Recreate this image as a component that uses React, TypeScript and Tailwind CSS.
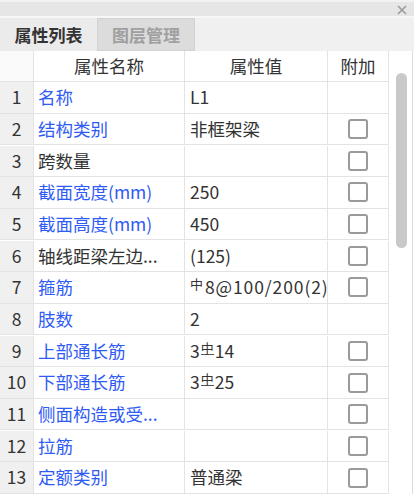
const rows = [
  { name: "名称", blue: true, value: "L1", check: false },
  { name: "结构类别", blue: true, value: "非框架梁", check: true },
  { name: "跨数量", blue: false, value: "", check: true },
  { name: "截面宽度(mm)", blue: true, value: "250", check: true },
  { name: "截面高度(mm)", blue: true, value: "450", check: true },
  { name: "轴线距梁左边...", blue: false, value: "(125)", check: true },
  { name: "箍筋", blue: true, value: "stirrup", check: true },
  { name: "肢数", blue: true, value: "2", check: false },
  { name: "上部通长筋", blue: true, value: "top", check: true },
  { name: "下部通长筋", blue: true, value: "bottom", check: true },
  { name: "侧面构造或受...", blue: true, value: "", check: true },
  { name: "拉筋", blue: true, value: "", check: true },
  { name: "定额类别", blue: true, value: "普通梁", check: true },
];

function Bar() {
  return (
    <span className="inline-block text-[13px] leading-[12px] border-b border-[#555] align-[5px] mx-[1px]">
      中
    </span>
  );
}

function Value({ v }: { v: string }) {
  if (v === "stirrup")
    return (
      <span className="whitespace-nowrap tracking-[0.9px]">
        <span className="inline-block text-[13px] leading-[13px] align-[5px] mr-[1px]">中</span>
        8@100/200(2)
      </span>
    );
  if (v === "top")
    return (
      <span className="whitespace-nowrap">
        3<Bar />14
      </span>
    );
  if (v === "bottom")
    return (
      <span className="whitespace-nowrap">
        3<Bar />25
      </span>
    );
  return <span className="whitespace-nowrap">{v}</span>;
}

function Check() {
  return <div className="w-[20px] h-[20px] rounded-[3px] border-2 border-[#9a9a9a] bg-white" />;
}

export default function App() {
  return (
    <div
      className="w-[414px] h-[494px] overflow-hidden bg-white text-[#333]"
      style={{ fontFamily: '"Noto Sans CJK SC", "Noto Sans", sans-serif' }}
    >
      <div className="h-[16px] bg-[#e6e6e6] border-t-2 border-[#f2f2f2] flex justify-end items-center pr-[7px]">
        <svg width="10" height="10" viewBox="0 0 10 10" className="mt-[2px]">
          <path d="M1 1L9 9M9 1L1 9" stroke="#999" strokeWidth="1.5" />
        </svg>
      </div>
      <div className="h-[2px] bg-[#f7f7f7]" />
      <div className="h-[33px] bg-[#f0f0f0] flex">
        <div className="w-[97px] bg-[#ebebeb] flex items-center justify-center text-[17px] font-bold text-[#333]">
          属性列表
        </div>
        <div className="w-[98px] bg-[#dcdcdc] border border-[#d2d2d2] flex items-center justify-center text-[17px] font-bold text-[#a0a0a0]">
          图层管理
        </div>
      </div>
      <div className="flex">
        <div className="grid grid-cols-[34px_151px_143px_61px] text-[17.5px]">
          <div className="h-[31px] border-r border-b border-[#e3e3e3] bg-[#fafafa]" />
          <div className="h-[31px] border-r border-b border-[#e3e3e3] flex items-center justify-center">属性名称</div>
          <div className="h-[31px] border-r border-b border-[#e3e3e3] flex items-center justify-center">属性值</div>
          <div className="h-[31px] border-r border-b border-[#e3e3e3] flex items-center justify-center">附加</div>
          {rows.map((r, i) => (
            <div key={i} className="contents">
              <div className="h-[31.5px] border-r border-b border-[#e3e3e3] bg-[#f0f0f0] flex items-center justify-center">
                {i + 1}
              </div>
              <div
                className={`h-[31.5px] border-r border-b border-[#e3e3e3] flex items-center pl-[4px] whitespace-nowrap ${
                  r.blue ? "text-[#2f5bf5]" : "text-[#333]"
                }`}
              >
                {r.name}
              </div>
              <div className="h-[31.5px] border-r border-b border-[#e3e3e3] flex items-center pl-[5px] overflow-hidden">
                <Value v={r.value} />
              </div>
              <div className="h-[31.5px] border-r border-b border-[#e3e3e3] flex items-center justify-center">
                {r.check && <Check />}
              </div>
            </div>
          ))}
        </div>
        <div className="w-[23px] pt-[22px] flex justify-center pl-[1px]">
          <div className="w-[11px] h-[175px] rounded-full bg-[#c9c9c9]" />
        </div>
        <div className="w-[1px] bg-[#dcdcdc] h-[443px]" />
      </div>
    </div>
  );
}
